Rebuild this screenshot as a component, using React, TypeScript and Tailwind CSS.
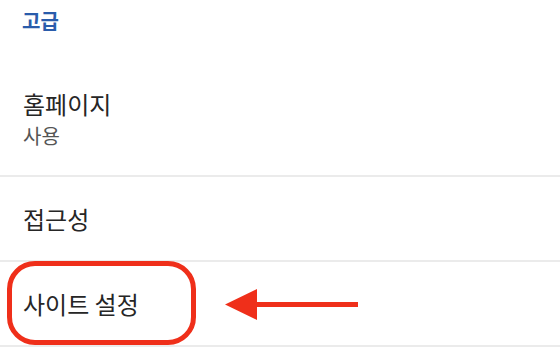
import React from 'react';

const font = { fontFamily: '"Noto Sans CJK KR", "Noto Sans", sans-serif' };

const Row: React.FC<{ className?: string; children: React.ReactNode }> = ({ className = '', children }) => (
    <div className={`relative flex flex-col justify-center px-[23px] border-b-2 border-[#ebebeb] ${className}`}>
        {children}
    </div>
);

const App: React.FC = () => {
    return (
        <div className="w-[560px] h-[354px] bg-white overflow-hidden" style={font}>
            {/* Section header */}
            <div className="h-[62px] px-[22px] pt-[8px]">
                <p className="text-[20px] leading-[26px] font-semibold text-[#2a5cab]">고급</p>
            </div>

            <Row className="h-[115px]">
                <p className="text-[24px] leading-[30px] text-[#262626]">홈페이지</p>
                <p className="mt-[5px] text-[20px] leading-[24px] text-[#555555]">사용</p>
            </Row>

            <Row className="h-[85px]">
                <p className="text-[24px] leading-[30px] text-[#262626]">접근성</p>
            </Row>

            <Row className="h-[85px]">
                <p className="text-[24px] leading-[30px] text-[#262626]">사이트 설정</p>

                {/* annotation: red outline + arrow */}
                <div className="absolute left-[7px] top-[-1px] w-[189px] h-[84px] rounded-[28px] border-[5px] border-[#ef2f1a]" />
                <svg className="absolute left-[225px] top-[27px]" width="135" height="33" viewBox="0 0 135 33">
                    <polygon points="0,15.5 32,0 32,31" fill="#ef2f1a" />
                    <rect x="30" y="13" width="103" height="5" fill="#ef2f1a" />
                </svg>
            </Row>
        </div>
    );
};

export default App;
